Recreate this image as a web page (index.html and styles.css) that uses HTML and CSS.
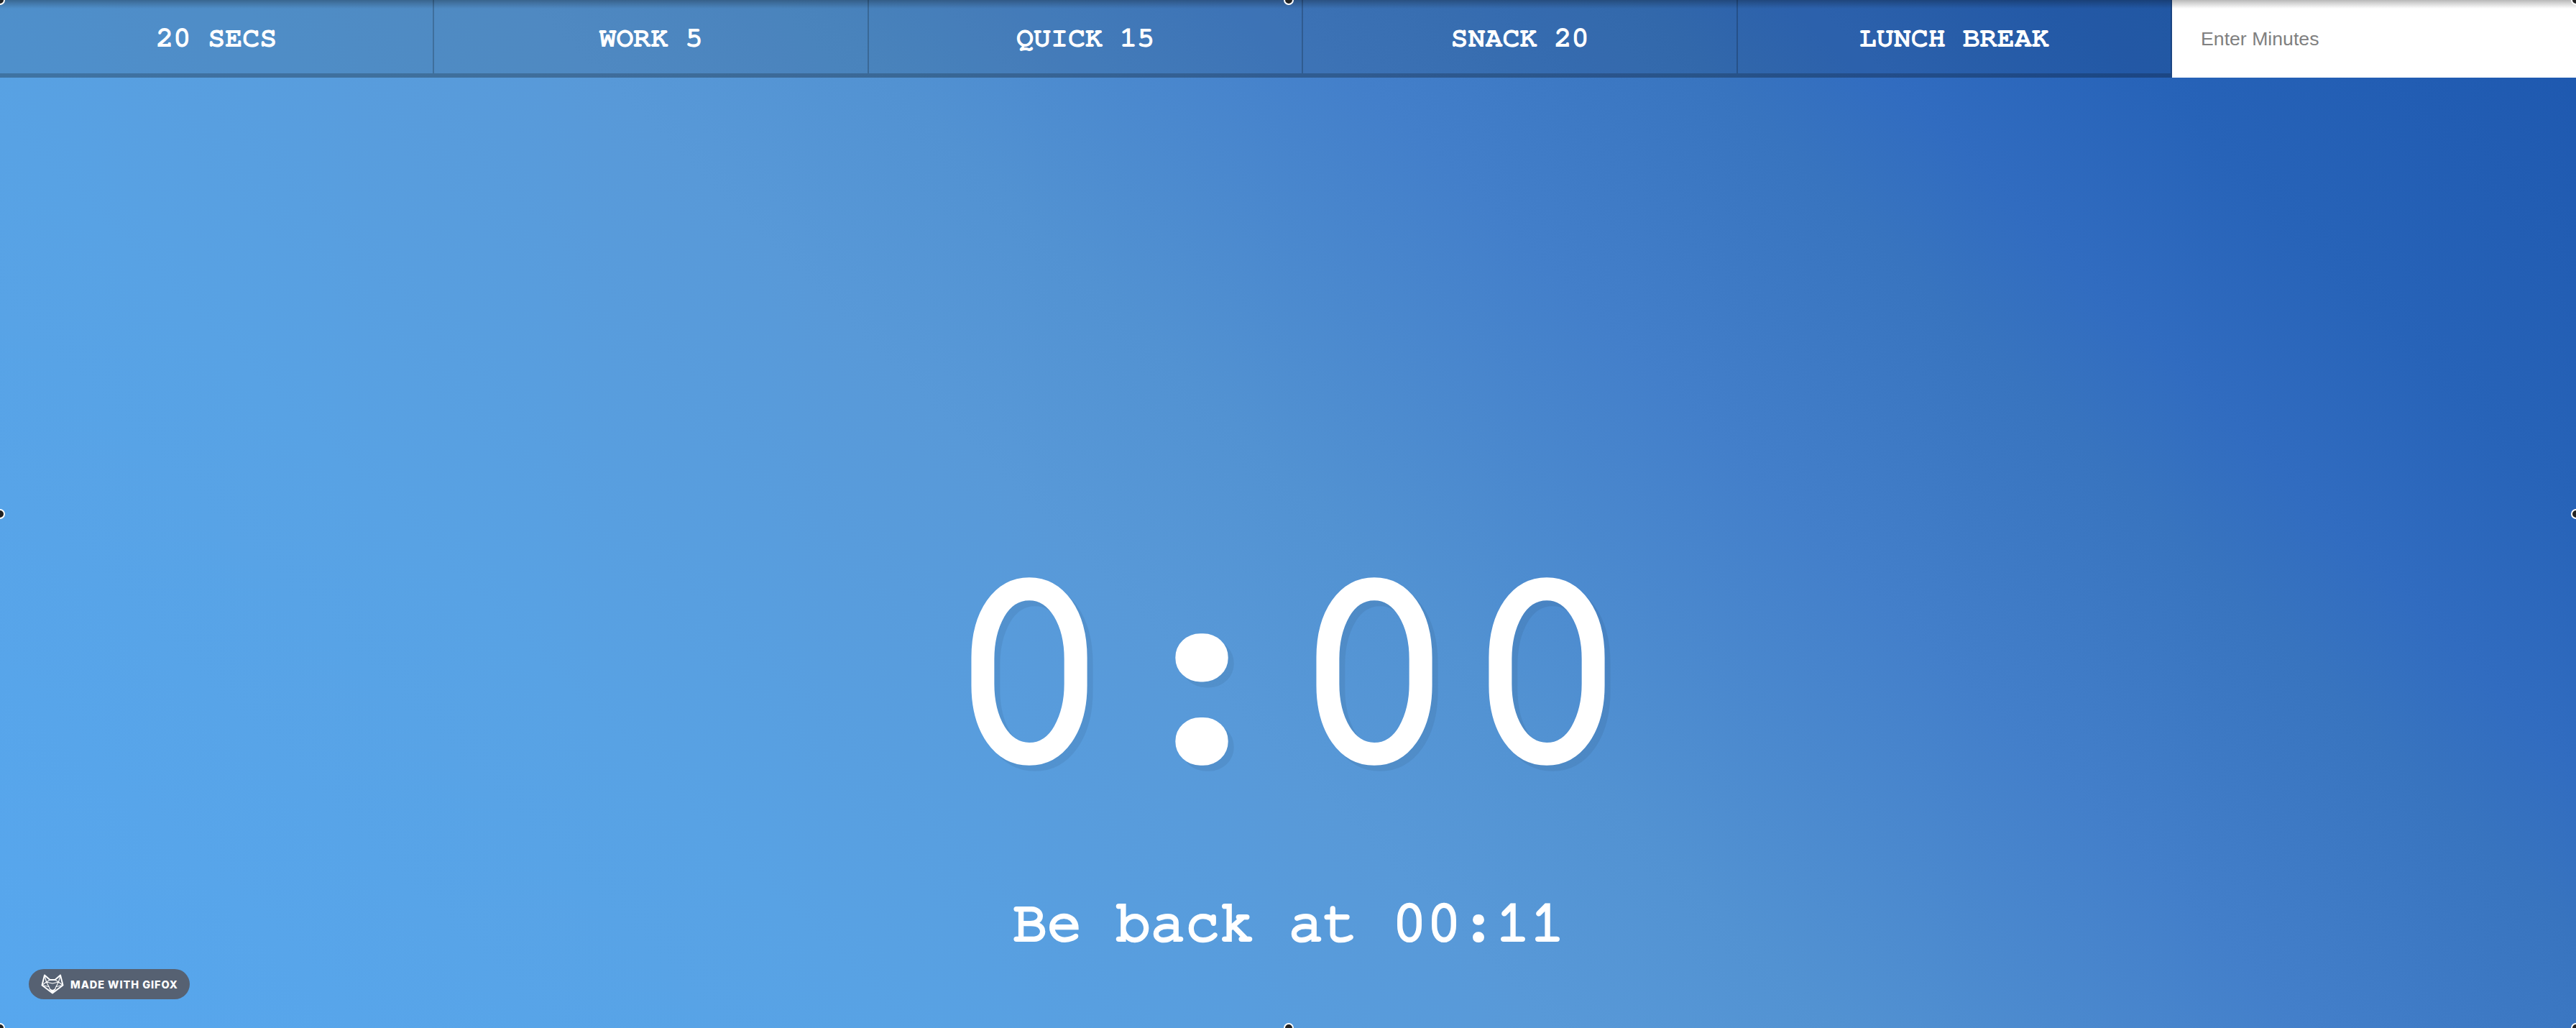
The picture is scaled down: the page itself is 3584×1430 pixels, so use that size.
FILE: index.html
```html
<!DOCTYPE html>
<html lang="en">
<head>
<meta charset="utf-8">
<title>Countdown Timer</title>
<link rel="stylesheet" href="styles.css">
</head>
<body>
<div class="timer">
  <div class="controls">
    <button class="timer-button">20 SECS</button>
    <button class="timer-button">WORK 5</button>
    <button class="timer-button">QUICK 15</button>
    <button class="timer-button">SNACK 20</button>
    <button class="timer-button">LUNCH BREAK</button>
    <form class="custom"><input class="minutes" type="text" placeholder="Enter Minutes"></form>
  </div>
  <main class="display">
    <h1 class="time-left">0:00</h1>
    <p class="end-time">Be back at 00:11</p>
  </main>
</div>
<div class="badge">
  <svg class="fox" viewBox="0 0 32 28" fill="none" stroke="#fff" stroke-linejoin="round">
    <path stroke-width="2" d="M5 1.500 12.500 8h7L27 1.500 30.500 15.500 16 26.500 1.500 15.500Z"/>
    <path stroke-width="1.100" d="M5 1.500 7.500 11 1.500 15.500 11 17.500 7.500 11 16 13 24.500 11 21 17.500 30.500 15.500 24.500 11 27 1.500M7.500 11 12.500 8M24.500 11 19.500 8M11 17.500 13.500 23M21 17.500 18.500 23"/>
    <path fill="#fff" stroke="none" d="M11 20 16 22 21 20 16 27Z"/>
  </svg>
  <span class="badge-text">MADE WITH GIFOX</span>
</div>
<i class="handle top left"></i><i class="handle top center"></i><i class="handle top right"></i>
<i class="handle middle left"></i><i class="handle middle right"></i>
<i class="handle bottom left"></i><i class="handle bottom center"></i><i class="handle bottom right"></i>
</body>
</html>
```
FILE: styles.css
```css
* { box-sizing: border-box; }
html, body { margin: 0; height: 100%; overflow: hidden; }
body {
  position: relative;
  font-family: FreeMono, "Liberation Mono", monospace;
  color: #fff;
  background: linear-gradient(45deg, #57a7ee 0%, #58a2e4 25%, #5899d8 43%, #5292d2 51%, #437fca 64%, #3874bf 74%, #316cc0 78.7%, #2763b8 86%, #1d57ae 100%);
}
.timer { display: flex; flex-direction: column; height: 100%; }
.controls { display: flex; height: 108px; flex: none; }
.timer-button {
  flex: 1;
  margin: 0;
  padding: 4px 0 0;
  border: 0;
  border-right: 2px solid rgba(0, 0, 0, .2);
  border-bottom: 6px solid rgba(0, 0, 0, .2);
  background: rgba(0, 0, 0, .1);
  color: inherit;
  font: 700 40px/48px FreeMono, "Liberation Mono", monospace;
}
.custom { width: 562px; display: flex; }
.minutes {
  width: 100%;
  border: 0;
  border-radius: 0;
  padding: 0 40px;
  background: #fff;
  font: 26.67px "Liberation Sans", Arial, sans-serif;
}
.minutes::placeholder { color: #808080; }
.display {
  flex: 1;
  display: flex;
  flex-direction: column;
  align-items: center;
  justify-content: flex-end;
  padding-bottom: 98px;
}
.time-left {
  margin: 0 0 61px 7.2px;
  font-size: 388px;
  letter-spacing: 7.2px;
  line-height: 480px;
  font-weight: 400;
  -webkit-text-stroke: 16px #fff;
  filter: drop-shadow(8px 8px 0 rgba(0, 0, 0, .06));
}
.end-time {
  margin: 0 0 0 2px;
  font-size: 80px;
  line-height: 96px;
  -webkit-text-stroke: 4px #fff;
}
body::after {
  content: "";
  position: absolute;
  inset: 0 0 auto;
  height: 12px;
  background: linear-gradient(rgba(0, 0, 0, .28), rgba(0, 0, 0, .16) 40%, transparent);
}
.badge {
  position: absolute;
  left: 40px;
  bottom: 40px;
  width: 224px;
  height: 42px;
  padding-left: 17px;
  border-radius: 21px;
  display: flex;
  align-items: center;
  gap: 9px;
  background: #566172;
}
.fox { width: 32px; height: 28px; }
.badge-text { font: 800 14.500px Inter, sans-serif; letter-spacing: .95px; white-space: nowrap; }
.handle {
  position: absolute;
  z-index: 1;
  width: 14px;
  height: 14px;
  margin: -7px;
  border: 2px solid #fff;
  border-radius: 50%;
  background: #222;
}
.top { top: 0; }
.middle { top: 50%; }
.bottom { top: 100%; }
.left { left: 0; }
.center { left: 1793px; }
.right { left: 100%; }
```
